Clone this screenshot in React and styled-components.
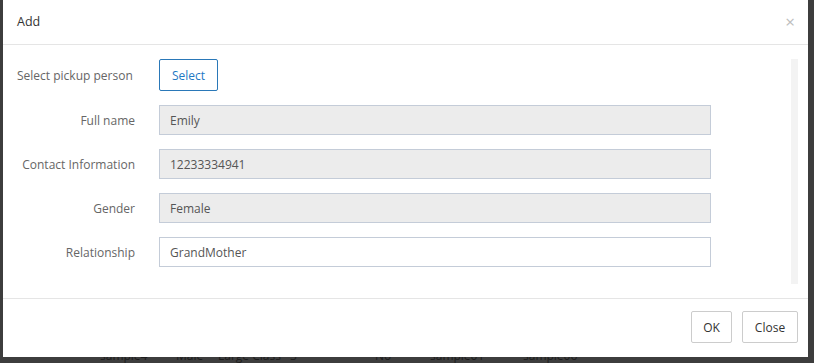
import React from 'react';
import styled, { createGlobalStyle } from 'styled-components';

const Global = createGlobalStyle`
  html, body { margin: 0; padding: 0; }
  body {
    background: #3d3d3d;
    font-family: "Open Sans", "Noto Sans", sans-serif;
    width: 814px;
    height: 363px;
    overflow: hidden;
  }
`;

const Page = styled.div`
  width: 814px;
  height: 363px;
  display: flex;
  flex-direction: column;
  background: #3d3d3d;
`;

const Modal = styled.div`
  margin: 0 6px 0 3px;
  height: 357px;
  background: #fff;
  display: flex;
  flex-direction: column;
  box-sizing: border-box;
  flex-shrink: 0;
`;

const Header = styled.div`
  height: 45px;
  box-sizing: border-box;
  border-bottom: 1px solid #e5e5e5;
  display: flex;
  align-items: center;
  justify-content: space-between;
  padding: 0 13px 2px 14px;
`;

const Title = styled.span`
  font-size: 12.5px;
  color: #333;
`;

const CloseX = styled.span`
  font-size: 17px;
  color: #bdbdbd;
  line-height: 1;
`;

const Body = styled.div`
  flex: 1;
  display: flex;
  padding: 14px 10px 14px 14px;
  box-sizing: border-box;
`;

const Form = styled.div`
  flex: 1;
  display: flex;
  flex-direction: column;
  gap: 14px;
`;

const Row = styled.div`
  display: grid;
  grid-template-columns: 118px 552px;
  column-gap: 24px;
  align-items: center;
  min-height: 30px;
`;

const Label = styled.label`
  font-size: 12px;
  color: #666;
  text-align: ${p => (p.left ? 'left' : 'right')};
  white-space: nowrap;
`;

const Field = styled.div`
  height: 30px;
  box-sizing: border-box;
  border: 1px solid #c4ccd8;
  background: ${p => (p.disabled ? '#ececec' : '#fff')};
  font-size: 12px;
  color: #555;
  display: flex;
  align-items: center;
  padding: 0 10px;
`;

const SelectButton = styled.button`
  width: 59px;
  height: 32px;
  border: 1px solid #2a78b8;
  border-radius: 2px;
  background: #fff;
  color: #1e78c4;
  font-family: inherit;
  font-size: 12px;
  padding: 0;
`;

const Track = styled.div`
  width: 7px;
  background: #f3f3f3;
  margin-left: 79px;
  align-self: stretch;
`;

const Footer = styled.div`
  height: 59px;
  box-sizing: border-box;
  border-top: 1px solid #e5e5e5;
  display: flex;
  justify-content: flex-end;
  align-items: center;
  gap: 10px;
  padding: 0 10px 2px 0;
`;

const FootButton = styled.button`
  height: 32px;
  width: ${p => p.w}px;
  padding: 0;
  border: 1px solid #ccc;
  border-radius: 2px;
  background: #fff;
  color: #333;
  font-family: inherit;
  font-size: 12px;
`;

const Behind = styled.div`
  height: 6px;
  overflow: hidden;
  display: flex;
  font-size: 12px;
  color: #1c1c1c;
`;

const Cell = styled.span`
  margin-top: -8px;
  line-height: 14px;
  height: 14px;
  width: ${p => p.w}px;
  padding-left: ${p => p.pl || 0}px;
  box-sizing: border-box;
  white-space: nowrap;
  overflow: hidden;
`;

const fields = [
  { label: 'Full name', value: 'Emily', disabled: true },
  { label: 'Contact Information', value: '12233334941', disabled: true },
  { label: 'Gender', value: 'Female', disabled: true },
  { label: 'Relationship', value: 'GrandMother', disabled: false },
];

export default function App() {
  return (
    <Page>
      <Global />
      <Modal>
        <Header>
          <Title>Add</Title>
          <CloseX>×</CloseX>
        </Header>
        <Body>
          <Form>
            <Row>
              <Label left>Select pickup person</Label>
              <div><SelectButton>Select</SelectButton></div>
            </Row>
            {fields.map((f, k) => (
              <Row key={k}>
                <Label>{f.label}</Label>
                <Field disabled={f.disabled}>{f.value}</Field>
              </Row>
            ))}
          </Form>
          <Track />
        </Body>
        <Footer>
          <FootButton w={41}>OK</FootButton>
          <FootButton w={56}>Close</FootButton>
        </Footer>
      </Modal>
      <Behind>
        <Cell w={170} pl={100}>sample4</Cell>
        <Cell w={48} pl={6}>Male</Cell>
        <Cell w={72}>Large Class</Cell>
        <Cell w={85}>3</Cell>
        <Cell w={55}>No</Cell>
        <Cell w={93}>sample01</Cell>
        <Cell w={90}>sample06</Cell>
      </Behind>
    </Page>
  );
}
